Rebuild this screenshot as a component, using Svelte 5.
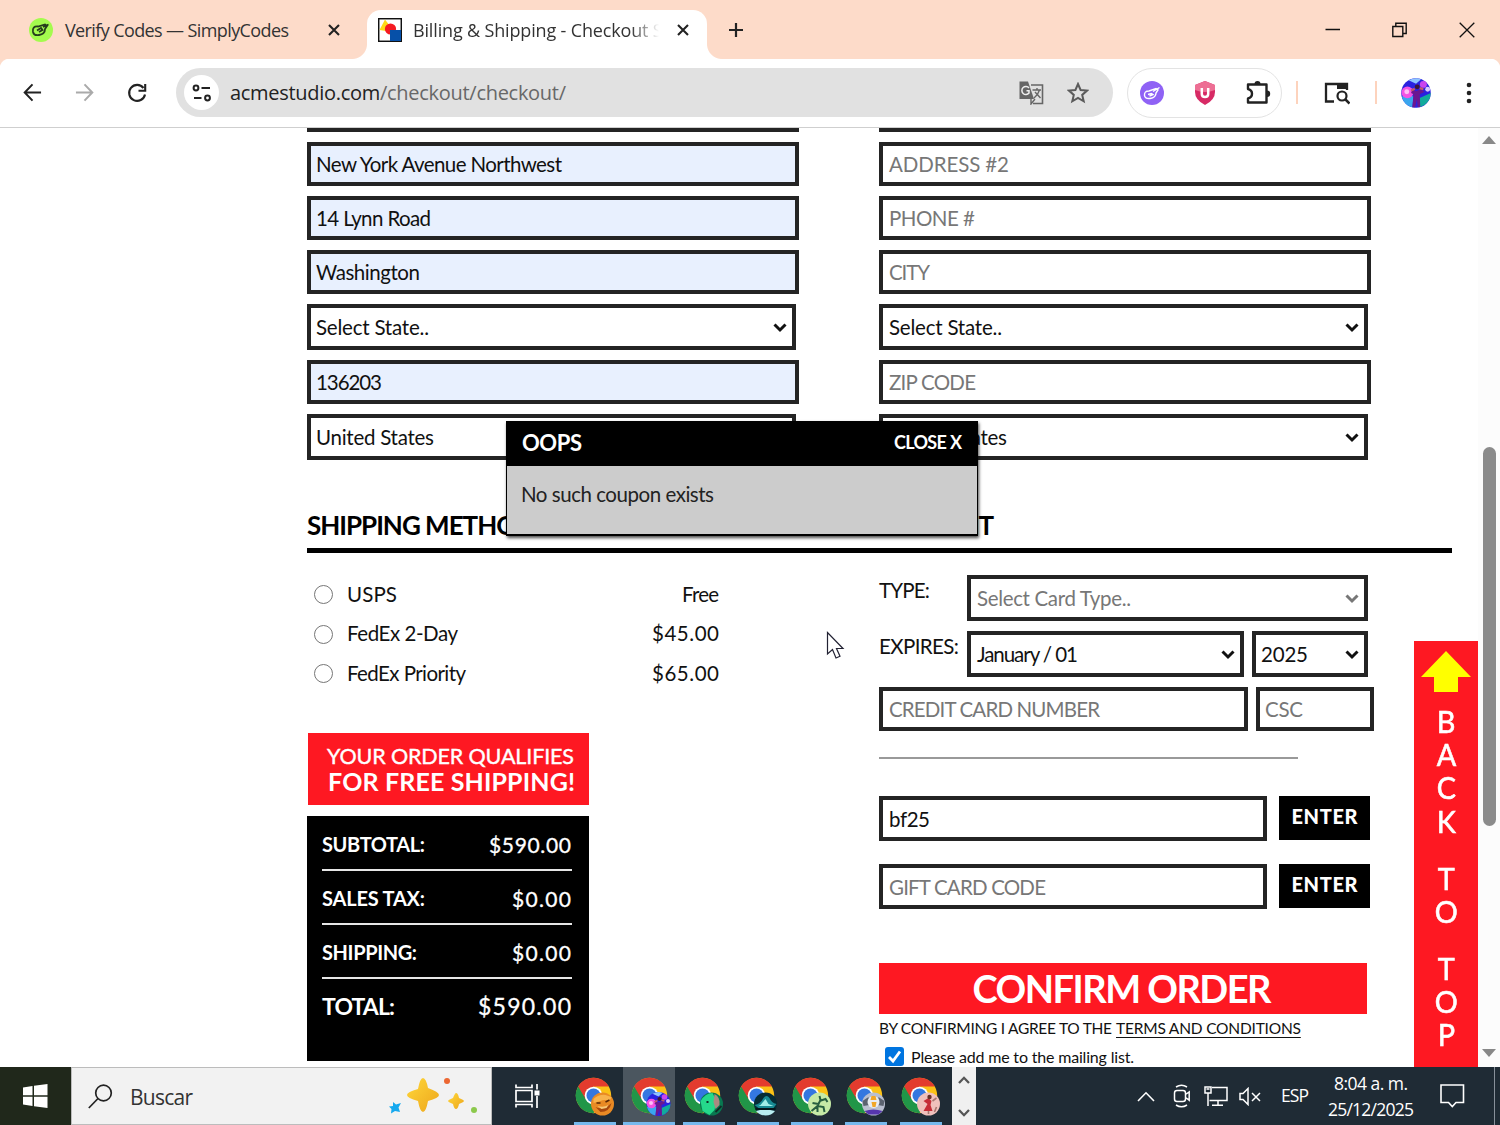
<script>
	const leftFields = [
		{ text: 'New York Avenue Northwest', w: 246 },
		{ text: '14 Lynn Road', w: 115 },
		{ text: 'Washington', w: 104 },
		{ text: 'Select State..', w: 113, select: true },
		{ text: '136203', w: 66 },
		{ text: 'United States', w: 118, select: true }
	]
	const rightFields = [
		{ text: 'ADDRESS #2', w: 120 },
		{ text: 'PHONE #', w: 86 },
		{ text: 'CITY', w: 41 },
		{ text: 'Select State..', w: 113, select: true },
		{ text: 'ZIP CODE', w: 87 },
		{ text: 'United States', w: 118, select: true }
	]
	const methods = [
		{ name: 'USPS', w: 50, price: 'Free', pw: 37 },
		{ name: 'FedEx 2-Day', w: 111, price: '$45.00', pw: 67 },
		{ name: 'FedEx Priority', w: 119, price: '$65.00', pw: 67 }
	]
	const totals = [
		{ name: 'SUBTOTAL:', w: 103, value: '$590.00', vw: 82 },
		{ name: 'SALES TAX:', w: 103, value: '$0.00', vw: 59 },
		{ name: 'SHIPPING:', w: 95, value: '$0.00', vw: 59 }
	]
	const profiles = ['fox', 'dancer', 'green', 'wave', 'lizard', 'robot', 'lady']

	// spread the letters so that the text takes up exactly w pixels
	function fit(node, w) {
		const range = document.createRange()
		range.selectNodeContents(node)
		const natural = range.getBoundingClientRect().width
		const ls = (w - natural) / Math.max(1, node.textContent.length - 1)
		node.style.letterSpacing = ls + 'px'
		node.style.marginRight = -ls + 'px'
	}
</script>

{#snippet chevron()}
	<svg class="chevron" width="14" height="10" viewBox="0 0 14 10">
		<path d="M1.5 1.5 7 7 12.5 1.5" fill="none" stroke="currentColor" stroke-width="3" />
	</svg>
{/snippet}

{#snippet avatar(kind)}
	{#if kind === 'fox'}
		<circle r="11.5" fill="#e98a24" />
		<path d="M-9-5Q-3-10 3-9L9-7 7-3Q2-5-2-3L-9-1Z" fill="#f8b34c" />
		<path d="M-7 3Q1 7 9-1Q7 8-2 8Z" fill="#a7480d" />
		<path d="M-5 2Q1 4 6 1L4 4-1 5Z" fill="#f7c877" />
		<path d="M-6-1-2-1M3-2 7-4" stroke="#572706" stroke-width="1.6" />
	{:else if kind === 'dancer'}
		<circle r="12" fill="#2a22e0" />
		<path d="M-11.5 3Q-7-1-2 3L-3 11.6A12 12 0 0 1-11.5 3Z" fill="#3aa6ee" />
		<path d="M12 0A12 12 0 0 1 3 11.6L3 4Z" fill="#12ab9c" />
		<circle cx="-7" cy="-.5" r="4.8" fill="#f453e4" />
		<circle cx="-7.5" cy="-1" r="2" fill="#ffc0f6" />
		<path d="M-6-10.3Q0-13.5 4-11L0-7.5Z" fill="#8ec4ff" />
		<circle cx="6" cy="-7" r="2.8" fill="#c944ee" />
		<circle cx="9.5" cy="-3" r="2" fill="#d8c8ff" />
		<path d="M-3-3 0-1.5 4-3 7-1 3 1 3.5 11.4H1.4L.8 5-.8 11.6H-3L-2 1-4 0Z" fill="#6b1790" />
		<path d="M-4-2-1-3.5M6-3 3-4" stroke="#c45a68" stroke-width="1.8" />
		<circle cx="1" cy="-5" r="2" fill="#3d1638" />
	{:else if kind === 'green'}
		<circle r="11.5" fill="#087850" />
		<path d="M-11-3Q-6-11 1-11L5-3 3 6-2 11-9 7Z" fill="#25d98b" />
		<path d="M3-10Q9-7 8 1L4 5 2-2Z" fill="#a98981" />
		<path d="M4 8 10 2M-5-2-3-2" stroke="#102c27" stroke-width="1.8" />
	{:else if kind === 'wave'}
		<circle r="11.5" fill="#062b35" />
		<path d="M-11 1Q-5 0-2-6Q1-10 4-6Q6-1 11 0L8 4-7 4Z" fill="#188b94" />
		<path d="M-5 1 0-5 3 0 8 2-7 2Z" fill="#9feee7" />
		<path d="M-9.5 7Q0 4 9.5 7Q6 11.5 0 11.5Q-6 11.5-9.5 7Z" fill="#b9eef2" />
		<path d="M-10 5 10 5" stroke="#04171c" stroke-width="2" />
	{:else if kind === 'lizard'}
		<circle r="11.5" fill="#c6eaa6" />
		<path d="M-8 7-2 2 1-4 0-8M0-3 6-5 8-2M-1 0-7-1M-2 2 4 3 5 8M-2 2-2 8" fill="none" stroke="#275f40" stroke-width="2" />
	{:else if kind === 'robot'}
		<circle r="11.5" fill="#b9bfd0" />
		<path d="M-11-3-5-7-4 1-10 2ZM11-3 5-7 4 1 10 2Z" fill="#5b6370" />
		<circle r="6" cy="-2" fill="#e9edf2" />
		<path d="M-2-8H2L3-4H-3ZM-2-2H3L2 3-1 3Z" fill="#f1a727" />
		<path d="M-9 7Q0 4 9 7L5 10.5H-5Z" fill="#5636ad" />
	{:else}
		<circle r="11.5" fill="#f0c0bc" />
		<path d="M0-6 3-3 2 1 4 7H-5L-1 0-5-3Z" fill="#c62d38" />
		<circle cx="1" cy="-7" r="2.2" fill="#673126" />
		<path d="M4-3 8-6M6 8 8 3M0 7V10" stroke="#a5766f" stroke-width="1.6" />
	{/if}
{/snippet}

{#snippet chrome(kind)}
	<svg width="42" height="42" viewBox="0 0 42 42">
		<circle cx="19.5" cy="19.5" r="17.7" fill="#fbc116" />
		<path d="M4.2 10.5A17.7 17.7 0 0 0 19.5 37.2L27.5 23 19.5 19Z" fill="#219648" />
		<path d="M4.2 10.5A17.7 17.7 0 0 1 34.8 10.5H19.5L11.5 23Z" fill="#e33b2e" />
		<circle cx="19.5" cy="19.5" r="8.8" fill="#fff" />
		<circle cx="19.5" cy="19.5" r="7" fill="#3477e0" />
		<g transform="translate(28.5 28)">{@render avatar(kind)}</g>
	</svg>
{/snippet}

{#snippet field(f, tone)}
	<div class="field {tone}" class:select={f.select}>
		<span use:fit={f.w}>{f.text}</span>
		{#if f.select}{@render chevron()}{/if}
	</div>
{/snippet}

<div class="screen">
	<header class="tabs">
		<div class="tab idle">
			<svg width="24" height="24" viewBox="0 0 24 24">
				<circle cx="12" cy="12" r="12" fill="#a4fb4e" />
				<path d="M4 14Q3 8 9 8.5L16 6.5 18 8 16 11Q16 16 10 17Q5 18 4 14ZM8 12.5 12 10 13.5 12 10 14M14 9 19.5 6.5" fill="none" stroke="#263d1c" stroke-width="1.8" />
			</svg>
			<span class="title" use:fit={224}>Verify Codes — SimplyCodes</span>
			<svg class="x" width="12" height="12" viewBox="0 0 12 12"><path d="M1 1 11 11M11 1 1 11" stroke="#222" stroke-width="2.1" /></svg>
		</div>
		<div class="tab active">
			<svg width="24" height="24" viewBox="0 0 24 24">
				<rect x=".7" y=".7" width="22.6" height="22.6" fill="#fff" stroke="#111" stroke-width="1.5" />
				<path d="M1.5 12 7 1.5 12 8 8 13Z" fill="#ffdb17" />
				<circle cx="12.5" cy="11" r="5.6" fill="#f51b22" />
				<path d="M12 12H23V23H12Z" fill="#0650a8" />
			</svg>
			<span class="title clipped"><span use:fit={256}>Billing &amp; Shipping - Checkout St</span></span>
			<svg class="x" width="12" height="12" viewBox="0 0 12 12"><path d="M1 1 11 11M11 1 1 11" stroke="#222" stroke-width="2.1" /></svg>
		</div>
		<svg class="plus" width="16" height="16" viewBox="0 0 16 16"><path d="M8 1V15M1 8H15" stroke="#222" stroke-width="2.2" /></svg>
		<div class="window-buttons">
			<svg width="16" height="16" viewBox="0 0 16 16"><path d="M.5 7.5H15" stroke="#111" stroke-width="1.5" /></svg>
			<svg width="16" height="16" viewBox="0 0 16 16"><path d="M.8 4.5H10.8V14.5H.8ZM3.8 4V1.2H14.2V11.5H11" fill="none" stroke="#111" stroke-width="1.4" /></svg>
			<svg width="16" height="16" viewBox="0 0 16 16"><path d="M.7.7 15.3 15.3M15.3.7.7 15.3" stroke="#111" stroke-width="1.3" /></svg>
		</div>
	</header>

	<nav class="toolbar">
		<svg class="nav-icon" width="19" height="19" viewBox="0 0 20 20"><path d="M10 1.5 1.8 10 10 18.5M2 10H19" fill="none" stroke="#222" stroke-width="2.1" /></svg>
		<svg class="nav-icon" width="19" height="19" viewBox="0 0 20 20"><path d="M10 1.5 18.2 10 10 18.5M1 10H18" fill="none" stroke="#aaa" stroke-width="2.1" /></svg>
		<svg class="nav-icon" width="20" height="20" viewBox="0 0 20 20"><path d="M16.5 5A8 8 0 1 0 18 11.5M18.2 1V7.8H11.5" fill="none" stroke="#222" stroke-width="2.1" /></svg>
		<div class="address">
			<span class="site">
				<svg width="20" height="18" viewBox="0 0 20 18"><g fill="none" stroke="#222" stroke-width="2"><circle cx="4" cy="4" r="2.4" /><path d="M9.5 4H18M2 14H9.5" /><circle cx="15.5" cy="14" r="2.4" /></g></svg>
			</span>
			<span class="url" use:fit={336}>acmestudio.com<i>/checkout/checkout/</i></span>
			<svg class="translate" width="25" height="25" viewBox="0 0 25 25">
				<path d="M12 5H23.5V23.5H14" fill="none" stroke="#666" stroke-width="1.6" />
				<path d="M.5 1.5H9L15 19H.5Z" fill="#666" />
				<path d="M10 8A4 4 0 1 0 10 13V10.7H7.5" fill="none" stroke="#eee" stroke-width="1.5" />
				<path d="M13.5 10H22M18 8V10M20.5 10Q19 15 15 18M16 12 21.5 18M12 19V24L16 19" fill="none" stroke="#666" stroke-width="1.4" />
			</svg>
			<svg class="star" width="22" height="22" viewBox="0 0 22 22"><path d="M11 2 13.6 8 20 8.6 15.2 12.9 16.7 19.3 11 15.9 5.3 19.3 6.8 12.9 2 8.6 8.4 8Z" fill="none" stroke="#5b5b5b" stroke-width="2" /></svg>
		</div>
		<div class="extensions">
			<svg width="24" height="24" viewBox="0 0 24 24">
				<circle cx="12" cy="12" r="12" fill="#8f62f5" />
				<path d="M4.5 14.5Q4 10 9 10L16 7.5 18 9 16 12Q16 16.5 10 17.5Q5 18 4.5 14.5ZM8 13.5 11.5 12.5 13 13.5 9.5 15M13 10.5 19.5 6.5" fill="none" stroke="#fff" stroke-width="1.4" />
			</svg>
			<svg width="22" height="24" viewBox="0 0 22 24">
				<path d="M11 0 21 4V11Q21 19 11 24Q1 19 1 11V4Z" fill="#d72a65" />
				<path d="M11 0 21 4V9Q11 13 1 9V4Z" fill="#ed6f94" />
				<path d="M7.8 7V13Q7.8 16 11 16T14.2 13V7" fill="none" stroke="#fff" stroke-width="2.5" />
			</svg>
			<svg width="25" height="24" viewBox="0 0 25 24">
				<path d="M2 3.5H20.5V21.5H2V17.5Q6 16.5 6 12.8T2 8Z" fill="none" stroke="#222" stroke-width="2.4" stroke-linejoin="round" />
				<path d="M8.5 3A3 3 0 0 1 14.5 3M21 9.5A3.2 3.2 0 0 1 21 15.9" fill="#222" />
			</svg>
		</div>
		<i class="divider first"></i>
		<svg class="panel" width="26" height="24" viewBox="0 0 26 24">
			<path d="M10 20.5H2V3H23V9" fill="none" stroke="#222" stroke-width="2.3" />
			<path d="M13 2H24V8H13Z" fill="#222" />
			<circle cx="18" cy="15" r="4.5" fill="none" stroke="#222" stroke-width="2.2" />
			<path d="M21 18 25.5 22.5" stroke="#222" stroke-width="2.5" />
		</svg>
		<i class="divider second"></i>
		<svg class="me" width="30" height="30" viewBox="-12.2 -12.2 24.4 24.4">{@render avatar('dancer')}</svg>
		<svg class="dots" width="6" height="22" viewBox="0 0 6 22" fill="#222"><circle cx="3" cy="3" r="2.3" /><circle cx="3" cy="11" r="2.3" /><circle cx="3" cy="19" r="2.3" /></svg>
	</nav>

	<div class="viewport">
		<main>
			<div class="addresses">
				<div class="column">
					<div class="field autofill"></div>
					{#each leftFields as f}
						{@render field(f, f.select ? '' : 'autofill')}
					{/each}
				</div>
				<div class="column">
					<div class="field"></div>
					{#each rightFields as f}
						{@render field(f, f.select ? '' : 'empty')}
					{/each}
				</div>
			</div>

			<div class="headings">
				<h2><span use:fit={229}>SHIPPING METHOD</span></h2>
				<h2><span use:fit={115}>PAYMENT</span></h2>
			</div>

			<div class="lower">
				<section class="shipping">
					<div class="methods">
						{#each methods as m}
							<div class="method">
								<i class="radio"></i>
								<span use:fit={m.w}>{m.name}</span>
								<span class="price" use:fit={m.pw}>{m.price}</span>
							</div>
						{/each}
					</div>
					<div class="banner">
						<span use:fit={247}>YOUR ORDER QUALIFIES</span>
						<b use:fit={247}>FOR FREE SHIPPING!</b>
					</div>
					<div class="summary">
						{#each totals as t}
							<div class="line">
								<b use:fit={t.w}>{t.name}</b>
								<span use:fit={t.vw}>{t.value}</span>
							</div>
						{/each}
						<div class="line total">
							<b use:fit={73}>TOTAL:</b>
							<span use:fit={93}>$590.00</span>
						</div>
					</div>
				</section>

				<section class="payment">
					<div class="row">
						<div class="label"><span use:fit={51}>TYPE:</span></div>
						<div class="field select empty type"><span use:fit={154}>Select Card Type..</span>{@render chevron()}</div>
					</div>
					<div class="row">
						<div class="label"><span use:fit={80}>EXPIRES:</span></div>
						<div class="field select month"><span use:fit={101}>January / 01</span>{@render chevron()}</div>
						<div class="field select year"><span use:fit={47}>2025</span>{@render chevron()}</div>
					</div>
					<div class="row">
						<div class="field empty card"><span use:fit={211}>CREDIT CARD NUMBER</span></div>
						<div class="field empty csc"><span use:fit={38}>CSC</span></div>
					</div>
					<hr />
					<div class="code">
						<div class="field"><span use:fit={41}>bf25</span></div>
						<button><span use:fit={66}>ENTER</span></button>
					</div>
					<div class="code">
						<div class="field empty"><span use:fit={157}>GIFT CARD CODE</span></div>
						<button><span use:fit={66}>ENTER</span></button>
					</div>
					<button class="confirm"><span use:fit={299}>CONFIRM ORDER</span></button>
					<p class="terms"><span use:fit={233}>BY CONFIRMING I AGREE TO THE</span><a href="#terms"><span use:fit={185}>TERMS AND CONDITIONS</span></a></p>
					<div class="mailing">
						<svg width="19" height="19" viewBox="0 0 19 19">
							<rect width="19" height="19" rx="3" fill="#0075e0" />
							<path d="M4 10 8 14 15 4.5" fill="none" stroke="#fff" stroke-width="2.8" />
						</svg>
						<span use:fit={223}>Please add me to the mailing list.</span>
					</div>
				</section>
			</div>
		</main>

		<div class="modal">
			<div class="modal-head">
				<b class="oops" use:fit={60}>OOPS</b>
				<b class="close" use:fit={68}>CLOSE X</b>
			</div>
			<div class="modal-body"><span use:fit={193}>No such coupon exists</span></div>
		</div>

		<div class="to-top">
			<svg width="50" height="42" viewBox="0 0 50 42"><path d="M25 0 50 26H37V41H13V26H0Z" fill="#ff0" /></svg>
			{#each ['BACK', 'TO', 'TOP'] as word}
				<div class="word">
					{#each word as letter}<span>{letter}</span>{/each}
				</div>
			{/each}
		</div>

		<svg class="cursor" width="20" height="30" viewBox="0 0 20 30"><path d="M1.5 1.5V23L6.5 18.5 10 27 14 25.3 10.5 17.5H17Z" fill="#fff" stroke="#223" stroke-width="1.2" /></svg>

		<div class="scrollbar">
			<i class="up"></i>
			<i class="thumb"></i>
			<i class="down"></i>
		</div>
	</div>

	<footer>
		<div class="start">
			<svg width="25" height="24" viewBox="0 0 25 24" fill="#fff"><path d="M0 3.5 9.5 2V11.3H0ZM11 1.8 24.5 0V11.3H11ZM0 12.7H9.5V22L0 20.6ZM11 12.7H24.5V24L11 22.2Z" /></svg>
		</div>
		<div class="search">
			<svg width="25" height="25" viewBox="0 0 25 25"><circle cx="15.5" cy="9" r="7.8" fill="none" stroke="#222" stroke-width="1.7" /><path d="M10 14.5.8 24" stroke="#222" stroke-width="1.7" /></svg>
			<span use:fit={63}>Buscar</span>
			<svg class="sparkles" width="90" height="37" viewBox="0 0 90 37">
				<defs>
					<linearGradient id="gold" x2="1" y2="1"><stop stop-color="#ffd83a" /><stop offset="1" stop-color="#eda51c" /></linearGradient>
				</defs>
				<path d="M35 1Q38 1 40 11Q51 15 51 18T40 24Q38 35 35 35T30 24Q19 21 19 18T30 12Q32 1 35 1Z" fill="url(#gold)" />
				<path d="M68 16Q70 16 71 21 76 23 76 24T71 27Q70 32 68 32T65 27Q60 25 60 24T65 21Q67 16 68 16Z" fill="url(#gold)" />
				<path d="M5 25 8 27.5 13 26 10.5 30.5 12 35 7 34 3 36.5 3.5 32 1 29.5 5 29Z" fill="#16a8ee" />
				<circle cx="59" cy="4" r="3" fill="#ec6732" />
				<circle cx="86" cy="33" r="3" fill="#8cc94c" />
			</svg>
		</div>
		<div class="task-view">
			<svg width="26" height="24" viewBox="0 0 26 24"><g fill="none" stroke="#fff" stroke-width="1.7"><path d="M1 6.5H17V17.5H1ZM1 .5V3.5H17V.5M1 23.5V20.5H17V23.5M22 0V5.5M22 12V24" /></g><rect x="19.5" y="6.5" width="5" height="5" fill="#fff" /></svg>
		</div>
		<div class="apps">
			{#each profiles as p}
				<div class="app" class:current={p === 'dancer'}>{@render chrome(p)}<i></i></div>
			{/each}
		</div>
		<div class="spin">
			<svg width="12" height="8" viewBox="0 0 12 8"><path d="M1 7 6 1.8 11 7" fill="none" stroke="#555" stroke-width="2.3" /></svg>
			<svg width="12" height="8" viewBox="0 0 12 8"><path d="M1 1 6 6.2 11 1" fill="none" stroke="#555" stroke-width="2.3" /></svg>
		</div>
		<div class="tray">
			<svg class="caret" width="18" height="11" viewBox="0 0 18 11"><path d="M1 10 9 1.8 17 10" fill="none" stroke="#fff" stroke-width="1.6" /></svg>
			<svg class="meet" width="18" height="24" viewBox="0 0 18 24"><path d="M4 6.5H10Q12.5 6.5 12.5 9V15Q12.5 17.5 10 17.5H4Q1.5 17.5 1.5 15V9Q1.5 6.5 4 6.5ZM12.5 10.5 16.2 8V16.2L12.5 13.5M3 3Q8.5-.5 14 3M3 21Q8.5 24.5 14 21" fill="none" stroke="#fff" stroke-width="1.5" /></svg>
			<svg class="net" width="24" height="21" viewBox="0 0 24 21"><path d="M8 1.5H23V14.5H5.5M1 1H7V7H1ZM2.5 3H5.5M4 7V20M14 14.5V19M8 19.3H19" fill="none" stroke="#fff" stroke-width="1.5" /></svg>
			<svg class="mute" width="23" height="19" viewBox="0 0 23 19"><path d="M1 6.5H4L9 1.5V17.5L4 12.5H1ZM13 6 21 14M21 6 13 14" fill="none" stroke="#fff" stroke-width="1.5" /></svg>
			<span class="lang" use:fit={28}>ESP</span>
			<div class="clock"><span use:fit={74}>8:04 a. m.</span><span use:fit={86}>25/12/2025</span></div>
			<svg class="note" width="25" height="24" viewBox="0 0 25 24"><path d="M1 1H23.5V18.5H16L12.3 22.5 8.5 18.5H1Z" fill="none" stroke="#fff" stroke-width="1.6" /></svg>
			<i class="peek"></i>
		</div>
	</footer>
</div>

<style>
	:global(body) {
		margin: 0;
		overflow: hidden;
	}
	.screen {
		width: 1500px;
		height: 1125px;
		display: flex;
		flex-direction: column;
		overflow: hidden;
		background: #fff;
		font-family: Lato, 'Liberation Sans', sans-serif;
		font-size: 20.5px;
		color: #111;
	}
	.screen :global(*) {
		box-sizing: border-box;
	}
	span,
	b {
		white-space: nowrap;
	}
	svg {
		display: block;
		flex: none;
	}

	/* browser chrome */
	.tabs {
		height: 59px;
		flex: none;
		display: flex;
		background: #fddbc9;
		font-family: 'Open Sans', 'Noto Sans', sans-serif;
		font-size: 18px;
	}
	.tab {
		display: flex;
		align-items: center;
		position: relative;
	}
	.tab .x {
		margin-left: auto;
	}
	.idle {
		width: 367px;
		padding: 1px 27px 0 29px;
	}
	.active {
		width: 340px;
		margin-top: 10px;
		padding: 0 18px 9px 11px;
		background: #fff;
		border-radius: 14px 14px 0 0;
	}
	.active::before,
	.active::after {
		content: '';
		position: absolute;
		bottom: 0;
		width: 15px;
		height: 15px;
	}
	.active::before {
		left: -15px;
		background: radial-gradient(circle at 0 0, #fddbc9 14.5px, #fff 15.5px);
	}
	.active::after {
		right: -15px;
		background: radial-gradient(circle at 100% 0, #fddbc9 14.5px, #fff 15.5px);
	}
	.title {
		margin-left: 12px;
		color: #333;
	}
	.clipped {
		width: 246px;
		margin-left: 11px;
		overflow: hidden;
		mask-image: linear-gradient(to right, #000 218px, transparent 246px);
	}
	.plus {
		margin: 22px 0 0 21px;
	}
	.window-buttons {
		display: flex;
		gap: 51px;
		margin: 22px 25px 0 auto;
	}
	.toolbar {
		height: 69px;
		flex: none;
		display: flex;
		align-items: center;
		padding: 0 0 1px 23px;
		border-bottom: 1px solid #cfcfcf;
		background:
			radial-gradient(circle at 100% 100%, #fff 10px, #fddbc9 11px) left top / 10px 10px no-repeat,
			radial-gradient(circle at 0 100%, #fff 10px, #fddbc9 11px) right top / 10px 10px no-repeat,
			#fff;
	}
	.nav-icon {
		margin-right: 33px;
	}
	.address {
		display: flex;
		align-items: center;
		width: 937px;
		height: 49px;
		margin-left: -4px;
		padding-left: 8px;
		border-radius: 25px;
		background: #e1e1e1;
		font-family: 'Open Sans', 'Noto Sans', sans-serif;
		font-size: 20px;
		color: #222;
	}
	.site {
		display: flex;
		align-items: center;
		justify-content: center;
		width: 35px;
		height: 35px;
		border-radius: 50%;
		background: #fff;
	}
	.url {
		margin-left: 11px;
	}
	.url i {
		font-style: normal;
		color: #686868;
	}
	.translate {
		margin-left: auto;
	}
	.star {
		margin: 0 24px 0 23px;
	}
	.extensions {
		display: flex;
		align-items: center;
		gap: 30px;
		width: 155px;
		height: 50px;
		margin-left: 14px;
		padding-left: 12px;
		border: 1px solid #e3e3e3;
		border-radius: 25px;
	}
	.divider {
		width: 2px;
		height: 23px;
		background: #fdd3bd;
	}
	.first {
		margin-left: 14px;
	}
	.panel {
		margin-left: 26px;
	}
	.second {
		margin-left: 25px;
	}
	.me {
		margin-left: 24px;
	}
	.dots {
		margin-left: 35px;
	}

	/* checkout page */
	.viewport {
		position: relative;
		flex: 1;
		min-height: 0;
		display: flex;
		overflow: hidden;
	}
	main {
		flex: 1;
		height: 939px;
		padding-left: 307px;
		overflow: hidden;
	}
	.addresses {
		display: flex;
		gap: 80px;
		margin-top: -40px;
	}
	.column {
		width: 492px;
		display: flex;
		flex-direction: column;
		gap: 10px;
	}
	.field {
		flex: none;
		height: 44px;
		display: flex;
		align-items: center;
		border: 4px solid #242424;
		padding: 0 5px 0 6px;
		background: #fff;
		color: #111;
	}
	.column:first-child .field {
		padding-left: 5px;
	}
	.column .field.select {
		width: 489px;
	}
	.select {
		height: 46px;
	}
	.autofill {
		background: #e8f0fe;
	}
	.empty {
		color: #777;
	}
	.chevron {
		margin: 2px 0 0 auto;
	}
	.headings {
		display: flex;
		width: 1145px;
		height: 93px;
		padding-top: 48px;
		border-bottom: 5px solid #000;
	}
	h2 {
		width: 572px;
		margin: 0;
		font-size: 26px;
		line-height: 35px;
		font-weight: 700;
		color: #000;
	}
	.lower {
		display: flex;
	}
	.shipping {
		width: 572px;
		padding-top: 22px;
	}
	.methods {
		height: 158px;
	}
	.method {
		display: flex;
		align-items: center;
		width: 412px;
		height: 39.5px;
		padding-left: 7px;
	}
	.method span {
		padding-bottom: 2px;
	}
	.radio {
		width: 19px;
		height: 19px;
		margin-right: 14px;
		border: 1.5px solid #767676;
		border-radius: 50%;
	}
	.price {
		margin-left: auto;
	}
	.banner {
		display: flex;
		flex-direction: column;
		width: 281px;
		height: 72px;
		margin-left: 1px;
		padding: 11px 0 0 19px;
		background: #fe1822;
		color: #fff;
		font-size: 21.5px;
		line-height: 25px;
		-webkit-text-stroke: 0.4px #fff;
	}
	.banner b {
		font-size: 25px;
		line-height: 24px;
		padding-left: 1px;
		-webkit-text-stroke: 0;
	}
	.summary {
		width: 282px;
		height: 245px;
		margin-top: 11px;
		padding: 1px 17px 0 15px;
		background: #000;
		color: #fff;
	}
	.line {
		display: flex;
		align-items: center;
		justify-content: space-between;
		height: 54px;
		padding-top: 2px;
		border-bottom: 2px solid #e6e6e6;
	}
	.line b {
		font-size: 20px;
	}
	.line span {
		font-size: 21px;
		padding-right: 1px;
		-webkit-text-stroke: 0.3px #fff;
	}
	.line.total {
		border: 0;
		padding-top: 0;
	}
	.total b,
	.total span {
		font-size: 23px;
	}
	.payment {
		padding-top: 22px;
	}
	.row {
		display: flex;
		margin-bottom: 10px;
	}
	.label {
		width: 88px;
		padding-top: 3px;
	}
	.type {
		width: 401px;
	}
	.month {
		width: 277px;
		margin-right: 8px;
	}
	.year {
		width: 116px;
		padding-left: 5px;
	}
	.card {
		width: 369px;
		margin-right: 8px;
	}
	.csc {
		width: 118px;
		padding-left: 5px;
	}
	hr {
		width: 419px;
		height: 2px;
		margin: 26px 0 37px;
		border: 0;
		background: #999;
	}
	.code {
		display: flex;
		margin-bottom: 23px;
	}
	.code .field {
		width: 388px;
		margin-right: 12px;
		height: 45px;
	}
	button {
		width: 91px;
		height: 44px;
		padding: 0 0 4px;
		border: 0;
		background: #000;
		color: #fff;
		font: 900 20px Lato, sans-serif;
	}
	.confirm {
		display: block;
		width: 488px;
		height: 51px;
		margin-top: 54px;
		padding: 0 2px 1px 0;
		background: #fe1822;
		font-size: 38px;
		font-weight: 700;
	}
	.terms {
		display: flex;
		gap: 4px;
		margin: 0;
		font-size: 15.5px;
		line-height: 29px;
	}
	.terms a {
		color: inherit;
		text-underline-offset: 3px;
	}
	.mailing {
		display: flex;
		align-items: center;
		gap: 7px;
		margin: 3px 0 0 6px;
		height: 20px;
		font-size: 16px;
	}

	/* coupon message */
	.modal {
		position: absolute;
		left: 506px;
		top: 293px;
		width: 472px;
		height: 115px;
		border: 1px solid #000;
		border-bottom-width: 2px;
		background: #ccc;
		box-shadow: 1px 2px 3px rgba(0, 0, 0, 0.7);
	}
	.modal-head {
		display: flex;
		align-items: center;
		justify-content: space-between;
		height: 44px;
		padding: 0 15px 4px;
		background: #000;
		color: #fff;
	}
	.oops {
		font-size: 22px;
	}
	.close {
		font-size: 18px;
	}
	.modal-body {
		padding: 16px 14px;
		color: #222;
	}
	.to-top {
		position: absolute;
		left: 1414px;
		top: 513px;
		width: 64px;
		height: 426px;
		display: flex;
		flex-direction: column;
		align-items: center;
		padding-top: 10px;
		background: #fe1822;
		color: #fff;
		font-size: 31px;
		line-height: 33.2px;
		-webkit-text-stroke: 0.6px #fff;
	}
	.to-top svg {
		margin-bottom: 12px;
	}
	.word {
		display: flex;
		flex-direction: column;
		align-items: center;
		margin-bottom: 23.7px;
	}
	.word span {
		transform: scaleX(0.93);
	}
	.cursor {
		position: absolute;
		left: 826px;
		top: 503px;
	}
	.scrollbar {
		display: flex;
		flex-direction: column;
		align-items: center;
		width: 22px;
		padding-top: 8px;
		background: #fcfcfc;
	}
	.up,
	.down {
		border: 7px solid transparent;
		border-top-width: 0;
		border-bottom: 8px solid #888;
	}
	.down {
		border-top: 8px solid #888;
		border-bottom-width: 0;
		margin-top: 223px;
	}
	.thumb {
		width: 13px;
		height: 379px;
		margin-top: 303px;
		border-radius: 7px;
		background: #8b8b8b;
	}

	/* taskbar */
	footer {
		height: 58px;
		flex: none;
		display: flex;
		background: #1f2b35;
		color: #fff;
		font-family: 'Open Sans', 'Noto Sans', sans-serif;
	}
	.start {
		width: 71px;
		padding: 17px 0 0 23px;
		background: #20281b;
	}
	.search {
		display: flex;
		align-items: center;
		width: 421px;
		padding: 0 13px 0 16px;
		border: 1px solid #bcbcbc;
		background: #f2f2f2;
		color: #333;
		font-size: 21px;
	}
	.search span {
		margin: 2px 0 0 17px;
	}
	.sparkles {
		margin: -2px 0 0 auto;
	}
	.task-view {
		width: 77px;
		padding: 17px 0 0 23px;
	}
	.apps {
		display: flex;
		gap: 2.3px;
		width: 383px;
	}
	.app {
		flex: none;
		width: 52px;
		height: 58px;
		display: flex;
		flex-direction: column;
		align-items: center;
		justify-content: space-between;
		padding-top: 9px;
	}
	.app i {
		width: 42px;
		height: 3px;
		background: #76b9ed;
	}
	.current {
		background: #4b565f;
	}
	.current svg {
		margin-left: 4px;
	}
	.current i {
		width: 52px;
	}
	.spin {
		display: flex;
		flex-direction: column;
		align-items: center;
		justify-content: space-between;
		width: 24px;
		padding: 9px 0 8px;
		background: #f0f0f0;
	}
	.tray {
		flex: 1;
		display: flex;
		align-items: center;
		padding-left: 161px;
		font-size: 17.5px;
	}
	.meet {
		margin-left: 18px;
	}
	.net {
		margin-left: 13px;
	}
	.mute {
		margin-left: 11px;
	}
	.lang {
		margin: -2px 0 0 19px;
	}
	.clock {
		display: flex;
		flex-direction: column;
		align-items: center;
		width: 88px;
		margin-left: 18px;
		line-height: 26px;
	}
	.note {
		margin-left: 25px;
	}
	.peek {
		width: 1px;
		height: 58px;
		margin-left: 29px;
		background: #87909a;
	}
</style>
